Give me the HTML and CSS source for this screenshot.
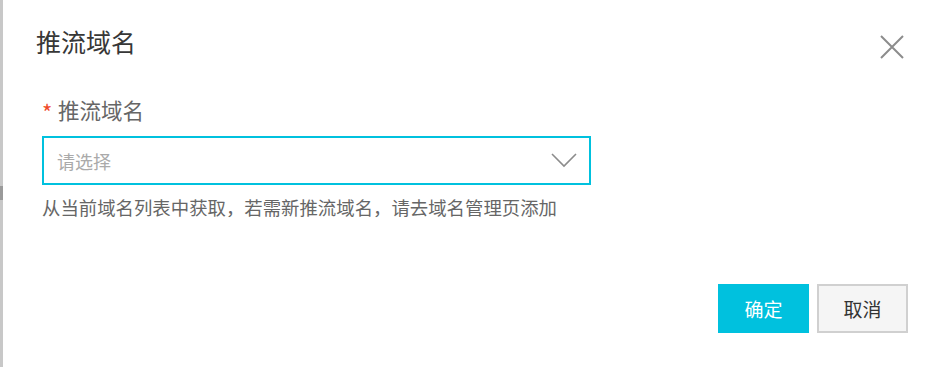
FILE: index.html
```html
<!DOCTYPE html>
<html lang="zh-CN">
<head>
  <meta charset="UTF-8" />
  <meta name="viewport" content="width=device-width, initial-scale=1.0" />
  <title>推流域名</title>
  <link rel="stylesheet" href="styles.css">
</head>
<body>
  <div class="edge"></div>

  <div class="dialog">
    <div class="dialog-header">
      <h2 class="dialog-title">推流域名</h2>
      <button class="close-btn" aria-label="关闭">
        <svg width="24" height="24" viewBox="0 0 24 24">
          <path d="M1 1 L23 23 M23 1 L1 23" stroke="#8c8c8c" stroke-width="2" fill="none" />
        </svg>
      </button>
    </div>

    <div class="form-item">
      <label class="form-label"><span class="required">*</span>推流域名</label>
      <div class="select">
        <span class="placeholder">请选择</span>
        <svg class="arrow" width="26" height="15" viewBox="0 0 26 15">
          <path d="M1 1 L13 13 L25 1" stroke="#8c8c8c" stroke-width="1.6" fill="none" />
        </svg>
      </div>
      <p class="help">从当前域名列表中获取，若需新推流域名，请去域名管理页添加</p>
    </div>

    <div class="dialog-footer">
      <button class="btn btn-primary">确定</button>
      <button class="btn btn-default">取消</button>
    </div>
  </div>
</body>
</html>
```

FILE: styles.css
```css
:root {
  --primary: #00c1de;
  --text: #333;
  --text-light: #666;
  --border: #d0d0d0;
}
body {
  margin: 0;
  height: 367px;
  display: flex;
  background: #fff;
  font-family: "Noto Sans CJK SC", "Liberation Sans", sans-serif;
  color: var(--text);
  overflow: hidden;
}
.edge {
  width: 3px;
  background: linear-gradient(to bottom, #c8c8c8 0, #c8c8c8 186px, #9a9a9a 186px, #9a9a9a 200px, #c8c8c8 200px);
}
.dialog {
  flex: 1;
  padding: 0 31px 0 39px;
}
.dialog-header {
  display: flex;
  justify-content: space-between;
  align-items: flex-start;
  margin-left: -6px;
  padding-top: 29px;
}
.dialog-title {
  margin: 0;
  font-size: 25px;
  line-height: 25px;
  font-weight: normal;
  color: #373737;
}
.close-btn {
  border: none;
  background: none;
  padding: 0;
  margin: 6px 4px 0 0;
  width: 24px;
  height: 24px;
  cursor: pointer;
}
.close-btn svg {
  display: block;
}
.form-item {
  margin-top: 38px;
}
.form-label {
  display: flex;
  align-items: center;
  font-size: 21.5px;
  line-height: 22px;
  color: var(--text-light);
}
.required {
  color: #f04a2a;
  font-size: 22px;
  width: 16px;
  line-height: 22px;
  padding-top: 3px;
}
.select {
  margin-top: 14px;
  width: 549px;
  height: 49px;
  box-sizing: border-box;
  border: 2px solid var(--primary);
  display: flex;
  align-items: center;
  justify-content: space-between;
  padding: 0 12px 0 13px;
}
.placeholder {
  font-size: 18px;
  color: #aaa;
}
.arrow {
  display: block;
}
.help {
  margin: 12px 0 0;
  font-size: 18.4px;
  line-height: 20px;
  color: var(--text-light);
}
.dialog-footer {
  display: flex;
  justify-content: flex-end;
  gap: 8px;
  margin-top: 67px;
}
.btn {
  width: 91px;
  height: 49px;
  box-sizing: border-box;
  font-family: inherit;
  font-size: 19px;
  cursor: pointer;
  padding: 0;
}
.btn-primary {
  background: var(--primary);
  color: #fff;
  border: none;
}
.btn-default {
  background: #f5f5f5;
  color: var(--text);
  border: 2px solid var(--border);
}
```
